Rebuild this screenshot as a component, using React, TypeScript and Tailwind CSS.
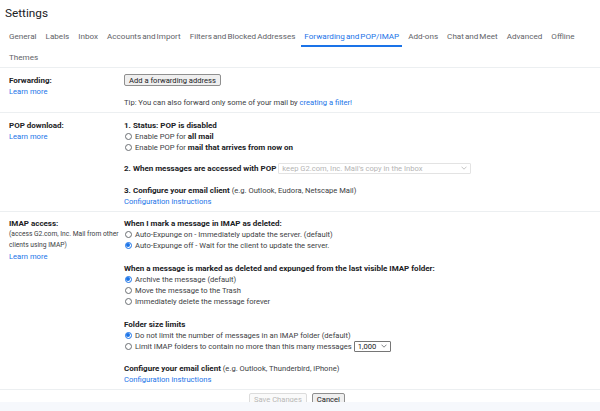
import React from "react";

const Radio = ({ checked = false }: { checked?: boolean }) => (
  <span
    className={
      "ml-[0.5px] mr-[3.5px] flex h-[7px] w-[7px] shrink-0 items-center justify-center rounded-full border " +
      (checked ? "border-[#1a73e8]" : "border-[#6b6f73]")
    }
  >
    {checked && <span className="h-[4px] w-[4px] rounded-full bg-[#1a73e8]" />}
  </span>
);

const RadioRow = ({ checked = false, children }: { checked?: boolean; children: React.ReactNode }) => (
  <div className="flex h-[11px] items-center whitespace-nowrap text-[#3c4043]">
    <Radio checked={checked} />
    <span>{children}</span>
  </div>
);

const Chevron = ({ color }: { color: string }) => (
  <svg width="6" height="4" viewBox="0 0 6 4" className="shrink-0">
    <polyline points="0.5,0.7 3,3.2 5.5,0.7" fill="none" stroke={color} strokeWidth="0.8" />
  </svg>
);

const Link = ({ children }: { children: React.ReactNode }) => (
  <div className="h-[11px] whitespace-nowrap text-[#1a73e8]">{children}</div>
);

const tabs = [
  "General",
  "Labels",
  "Inbox",
  "Accounts and Import",
  "Filters and Blocked Addresses",
  "Forwarding and POP/IMAP",
  "Add-ons",
  "Chat and Meet",
  "Advanced",
  "Offline",
];

export default function App() {
  return (
    <div
      className="flex h-[411px] w-[600px] flex-col overflow-hidden bg-[#f6f8fc] text-[7.6px] leading-[11px] text-[#202124]"
      style={{ fontFamily: "Roboto, 'Liberation Sans', Arial, sans-serif" }}
    >
      <div className="h-[402px] shrink-0 overflow-hidden bg-white">
        {/* Title */}
        <div className="h-[25px] pl-[5px] pt-[6px] text-[11.8px] leading-[15px] text-[#202124]">Settings</div>

        {/* Tabs row 1 */}
        <div className="flex h-[22px] items-stretch whitespace-nowrap pl-[6px] text-[8.1px] text-[#5f6368] [word-spacing:-1px]">
          {tabs.map((t) => {
            const active = t === "Forwarding and POP/IMAP";
            return (
              <div
                key={t}
                className={
                  "mr-[3px] flex items-center border-b-2 px-[3px] pt-[2px] " +
                  (active ? "border-[#1a73e8] text-[#1a73e8]" : "border-transparent")
                }
              >
                {t}
              </div>
            );
          })}
        </div>

        {/* Tabs row 2 */}
        <div className="flex h-[21px] items-center border-b border-[#eceff1] pl-[9px] pt-[1px] text-[8.1px] text-[#5f6368]">
          Themes
        </div>

        {/* Forwarding */}
        <div className="flex h-[45px] border-b border-[#eceff1] pt-[6.5px]">
          <div className="w-[124px] shrink-0 pl-[9px]">
            <div className="text-[8px] font-bold">Forwarding:</div>
            <Link>Learn more</Link>
          </div>
          <div className="flex flex-col whitespace-nowrap">
            <div className="mt-[-0.5px] flex h-[12px] items-center self-start rounded-[2px] border border-[#8f8f8f] bg-[#efefef] px-[4px]">
              Add a forwarding address
            </div>
            <div className="mt-[11px] text-[#3c4043]">
              Tip: You can also forward only some of your mail by{" "}
              <span className="text-[#1a73e8]">creating a filter!</span>
            </div>
          </div>
        </div>

        {/* POP download */}
        <div className="flex h-[99px] border-b border-[#eceff1] pt-[6.5px]">
          <div className="w-[124px] shrink-0 pl-[9px]">
            <div className="text-[8px] font-bold">POP download:</div>
            <Link>Learn more</Link>
          </div>
          <div className="flex flex-col whitespace-nowrap">
            <div className="text-[8px] font-bold">1. Status: POP is disabled</div>
            <RadioRow>
              Enable POP for <b className="text-[8px] text-[#202124]">all mail</b>
            </RadioRow>
            <RadioRow>
              Enable POP for <b className="text-[8px] text-[#202124]">mail that arrives from now on</b>
            </RadioRow>
            <div className="mt-[10px] flex h-[11px] items-center">
              <span className="text-[8px] font-bold">2. When messages are accessed with POP</span>
              <div className="ml-[2px] flex h-[11px] w-[193px] items-center justify-between rounded-[1px] border border-[#e3e3e3] pl-[3px] pr-[3px] text-[#b5b5b5]">
                <span>keep G2.com, Inc. Mail's copy in the Inbox</span>
                <Chevron color="#b5b5b5" />
              </div>
            </div>
            <div className="mt-[11px]">
              <b className="text-[8px]">3. Configure your email client</b>
              <span className="text-[#3c4043]"> (e.g. Outlook, Eudora, Netscape Mail)</span>
            </div>
            <Link>Configuration instructions</Link>
          </div>
        </div>

        {/* IMAP */}
        <div className="flex h-[178px] border-b border-[#eceff1] pt-[5.5px]">
          <div className="w-[124px] shrink-0 pl-[9px]">
            <div className="text-[8px] font-bold">IMAP access:</div>
            <div className="h-[11px] whitespace-nowrap text-[6.7px] text-[#3c4043]">(access G2.com, Inc. Mail from other</div>
            <div className="h-[11px] whitespace-nowrap text-[6.7px] text-[#3c4043]">clients using IMAP)</div>
            <Link>Learn more</Link>
          </div>
          <div className="flex flex-col whitespace-nowrap">
            <div className="text-[8px] font-bold">When I mark a message in IMAP as deleted:</div>
            <RadioRow>Auto-Expunge on - Immediately update the server. (default)</RadioRow>
            <RadioRow checked>Auto-Expunge off - Wait for the client to update the server.</RadioRow>

            <div className="mt-[12px] text-[8px] font-bold">
              When a message is marked as deleted and expunged from the last visible IMAP folder:
            </div>
            <RadioRow checked>Archive the message (default)</RadioRow>
            <RadioRow>Move the message to the Trash</RadioRow>
            <RadioRow>Immediately delete the message forever</RadioRow>

            <div className="mt-[12px] text-[8px] font-bold">Folder size limits</div>
            <RadioRow checked>Do not limit the number of messages in an IMAP folder (default)</RadioRow>
            <div className="flex h-[11px] items-center text-[#3c4043]">
              <Radio />
              <span>Limit IMAP folders to contain no more than this many messages</span>
              <div className="ml-[2px] flex h-[11px] w-[37px] items-center justify-between rounded-[1px] border border-[#767676] pl-[3px] pr-[3px] text-[#202124]">
                <span>1,000</span>
                <Chevron color="#5f6368" />
              </div>
            </div>

            <div className="mt-[11px]">
              <b className="text-[8px]">Configure your email client</b>
              <span className="text-[#3c4043]"> (e.g. Outlook, Thunderbird, iPhone)</span>
            </div>
            <Link>Configuration instructions</Link>
          </div>
        </div>

        {/* Buttons */}
        <div className="flex justify-center gap-[5px] pr-[6px] pt-[3px] whitespace-nowrap">
          <div className="flex h-[12px] items-center rounded-[2px] border border-[#dcdcdc] bg-[#fafafa] px-[4px] text-[#b8b8b8]">
            Save Changes
          </div>
          <div className="flex h-[12px] items-center rounded-[2px] border border-[#8f8f8f] bg-[#efefef] px-[4px]">
            Cancel
          </div>
        </div>
      </div>
    </div>
  );
}
